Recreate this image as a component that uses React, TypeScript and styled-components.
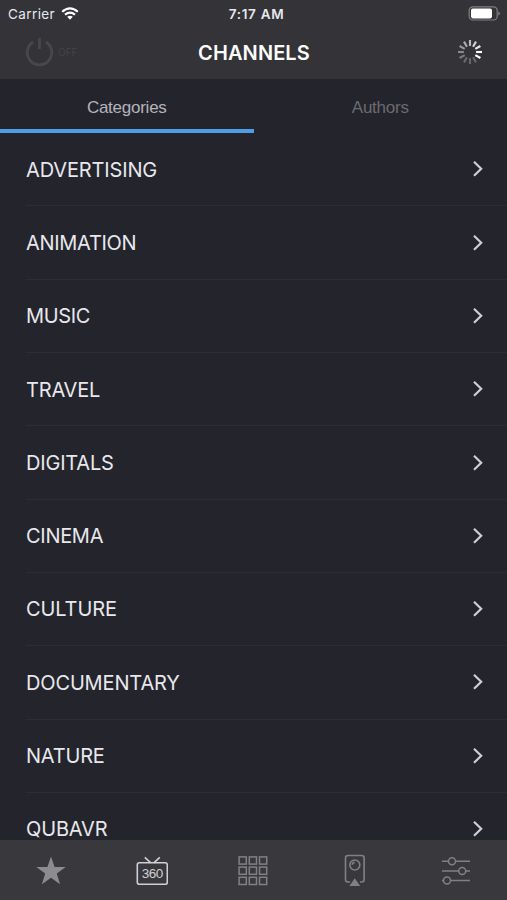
import React from 'react';
import styled, { createGlobalStyle } from 'styled-components';

const GlobalStyle = createGlobalStyle`
  * { box-sizing: border-box; }
  body { margin: 0; background: #24242c; }
`;

const Screen = styled.div`
  width: 507px;
  height: 900px;
  display: flex;
  flex-direction: column;
  overflow: hidden;
  background: #24242c;
  color: #e8e8ed;
  font-family: Inter, 'Liberation Sans', sans-serif;
`;

const Header = styled.header`
  flex: none;
  height: 79px;
  background: #333338;
`;

const StatusBar = styled.div`
  display: grid;
  grid-template-columns: 1fr auto 1fr;
  align-items: center;
  height: 27px;
  padding: 0 7px 0 8px;
  font-size: 13.5px;
`;

const Carrier = styled.div`
  display: flex;
  align-items: center;
  gap: 6px;
  letter-spacing: 0.4px;
`;

const Time = styled.div`
  padding-left: 5px;
  font-weight: 600;
  font-size: 13.5px;
  letter-spacing: 0.7px;
`;

const BatteryIcon = styled.svg`
  justify-self: end;
`;

const TitleBar = styled.div`
  display: grid;
  grid-template-columns: 1fr auto 1fr;
  align-items: center;
  height: 50px;
  padding: 0 24px 0 25px;
`;

const PowerToggle = styled.div`
  display: flex;
  align-items: center;
  gap: 4px;
  color: #434348;
  font-size: 10px;
`;

const Title = styled.h1`
  margin: 0;
  padding-top: 2px;
  font-size: 20px;
  font-weight: 600;
  letter-spacing: 0.1px;
  color: #fbfbfc;
`;

const Spinner = styled.svg`
  justify-self: end;
`;

const Tabs = styled.nav`
  flex: none;
  display: grid;
  grid-template-columns: 1fr 1fr;
  height: 54px;
`;

const Tab = styled.div<{ $active?: boolean }>`
  display: flex;
  align-items: center;
  justify-content: center;
  padding-top: 7px;
  border-bottom: 4px solid ${(p) => (p.$active ? '#4e9de9' : 'transparent')};
  color: ${(p) => (p.$active ? '#b4b4bb' : '#6b6b72')};
  font-family: 'Liberation Sans', sans-serif;
  font-size: 17px;
  letter-spacing: -0.25px;
`;

const List = styled.main`
  flex: 1;
  min-height: 0;
  overflow: hidden;
  padding: 0.2px 0 0 26px;
`;

const Row = styled.div`
  display: flex;
  align-items: center;
  justify-content: space-between;
  height: 73.3px;
  padding-right: 23px;
  border-bottom: 1px solid #2d2d35;
`;

const Label = styled.span<{ $spacing: number }>`
  padding-top: 0.6px;
  font-size: 20px;
  line-height: 20px;
  letter-spacing: ${(p) => p.$spacing}px;
`;

const TabBar = styled.footer`
  flex: none;
  display: grid;
  grid-template-columns: repeat(5, 1fr);
  height: 60px;
  background: #38383d;
`;

const TabItem = styled.div<{ $active?: boolean }>`
  display: flex;
  align-items: center;
  justify-content: center;
  padding-top: 1px;
  color: ${(p) => (p.$active ? '#d0d0d4' : '#818185')};
`;

const channels: { name: string; spacing: number }[] = [
  { name: 'ADVERTISING', spacing: -0.15 },
  { name: 'ANIMATION', spacing: -0.3 },
  { name: 'MUSIC', spacing: -0.35 },
  { name: 'TRAVEL', spacing: -0.2 },
  { name: 'DIGITALS', spacing: -0.2 },
  { name: 'CINEMA', spacing: -0.3 },
  { name: 'CULTURE', spacing: -0.1 },
  { name: 'DOCUMENTARY', spacing: -0.15 },
  { name: 'NATURE', spacing: -0.2 },
  { name: 'QUBAVR', spacing: -0.15 },
];

const spokes = [0.68, 0.78, 0.9, 1, 1, 0.25, 0.25, 0.27, 0.35, 0.42, 0.5, 0.6];
const cells = [0, 10.2, 20.4];

const Wifi = () => (
  <svg width="18" height="14" viewBox="0 0 18 14" fill="none" stroke="#fff" strokeWidth="2.2">
    <path d="M1.2 4.8Q9-2.1 16.8 4.8" />
    <path d="M4 7.7Q9 3.5 14 7.7" />
    <path d="M6.2 9.8Q9 7.7 11.8 9.8L9 12.7Z" fill="#fff" stroke="none" />
  </svg>
);

const Battery = () => (
  <BatteryIcon width="32" height="16" viewBox="0 0 32 16">
    <rect x="1.2" y="0.8" width="28" height="13.2" rx="3.6" fill="none" stroke="#808084" strokeWidth="1.2" />
    <rect x="3" y="2.4" width="21" height="10" rx="1.8" fill="#fff" />
    <path d="M30.3 5.4Q32 5.9 32 7.4T30.3 9.4Z" fill="#808084" />
  </BatteryIcon>
);

export default function App() {
  return (
    <Screen>
      <GlobalStyle />
      <Header>
        <StatusBar>
          <Carrier>
            Carrier
            <Wifi />
          </Carrier>
          <Time>7:17 AM</Time>
          <Battery />
        </StatusBar>
        <TitleBar>
          <PowerToggle>
            <svg width="29" height="30" viewBox="0 0 29 30" fill="none" stroke="#47474c" strokeWidth="2.8">
              <path d="M8.2 5A12.3 12.3 0 1 0 20.8 5M14.5 1V12" />
            </svg>
            OFF
          </PowerToggle>
          <Title>CHANNELS</Title>
          <Spinner width="26" height="26" viewBox="-13 -13 26 26" stroke="#fff" strokeWidth="2.1">
            {spokes.map((opacity, i) => (
              <path key={i} d="M0-6.1V-12" opacity={opacity} transform={`rotate(${i * 30})`} />
            ))}
          </Spinner>
        </TitleBar>
      </Header>
      <Tabs>
        <Tab $active>Categories</Tab>
        <Tab>Authors</Tab>
      </Tabs>
      <List>
        {channels.map((c) => (
          <Row key={c.name}>
            <Label $spacing={c.spacing}>{c.name}</Label>
            <svg width="12" height="18" viewBox="0 0 12 18" fill="none" stroke="#cfcfd5" strokeWidth="2.2">
              <path d="M2 1.8L9.2 8.8L2 15.8" />
            </svg>
          </Row>
        ))}
      </List>
      <TabBar>
        <TabItem>
          <svg width="30" height="29" viewBox="0 0 30 29" fill="#8c8c8e">
            <path d="M15 0.5L18.6 11H29.7L20.8 17.6L24.1 28.3L15 21.8L5.9 28.3L9.2 17.6L0.3 11H11.4Z" />
          </svg>
        </TabItem>
        <TabItem $active>
          <svg width="32" height="30" viewBox="0 0 32 30" fill="none" stroke="currentColor" strokeWidth="1.6">
            <rect x="1.3" y="6.8" width="30" height="21.5" rx="2" />
            <path d="M8.8 1.3L14.8 6.8M23.8 1.3L17.8 6.8" />
            <text x="16.3" y="22.4" textAnchor="middle" fontFamily="Liberation Sans, sans-serif" fontSize="13.5" letterSpacing="-0.4" fill="currentColor" stroke="none">360</text>
          </svg>
        </TabItem>
        <TabItem>
          <svg width="30" height="30" viewBox="0 0 30 30" fill="none" stroke="currentColor" strokeWidth="1.5">
            {cells.map((y) => cells.map((x) => <rect key={`${x}-${y}`} x={x + 1.1} y={y + 0.9} width="7.2" height="7.2" />))}
          </svg>
        </TabItem>
        <TabItem>
          <svg width="22" height="34" viewBox="0 0 22 34" fill="none" stroke="currentColor" strokeWidth="1.6">
            <path d="M6 28H4Q1.5 28 1.5 25.5V4Q1.5 1.5 4 1.5H17.6Q20.1 1.5 20.1 4V25.5Q20.1 28 17.6 28H16" />
            <circle cx="10.8" cy="11" r="5" />
            <path d="M8.3 10.8Q8.5 8.6 10.6 8.4" />
            <path d="M10.8 24.2L16.2 32H5.4Z" fill="currentColor" stroke="none" />
          </svg>
        </TabItem>
        <TabItem>
          <svg width="30" height="30" viewBox="0 0 30 30" fill="none" stroke="currentColor" strokeWidth="1.5">
            <path d="M1 5.2H7.5M14.5 5.2H29M1 15H17.7M24.7 15H29M9.5 24.6H29M1 24.6H2.5" />
            <circle cx="11" cy="5.2" r="3.5" />
            <circle cx="21.2" cy="15" r="3.5" />
            <circle cx="6" cy="24.6" r="3.5" />
          </svg>
        </TabItem>
      </TabBar>
    </Screen>
  );
}
